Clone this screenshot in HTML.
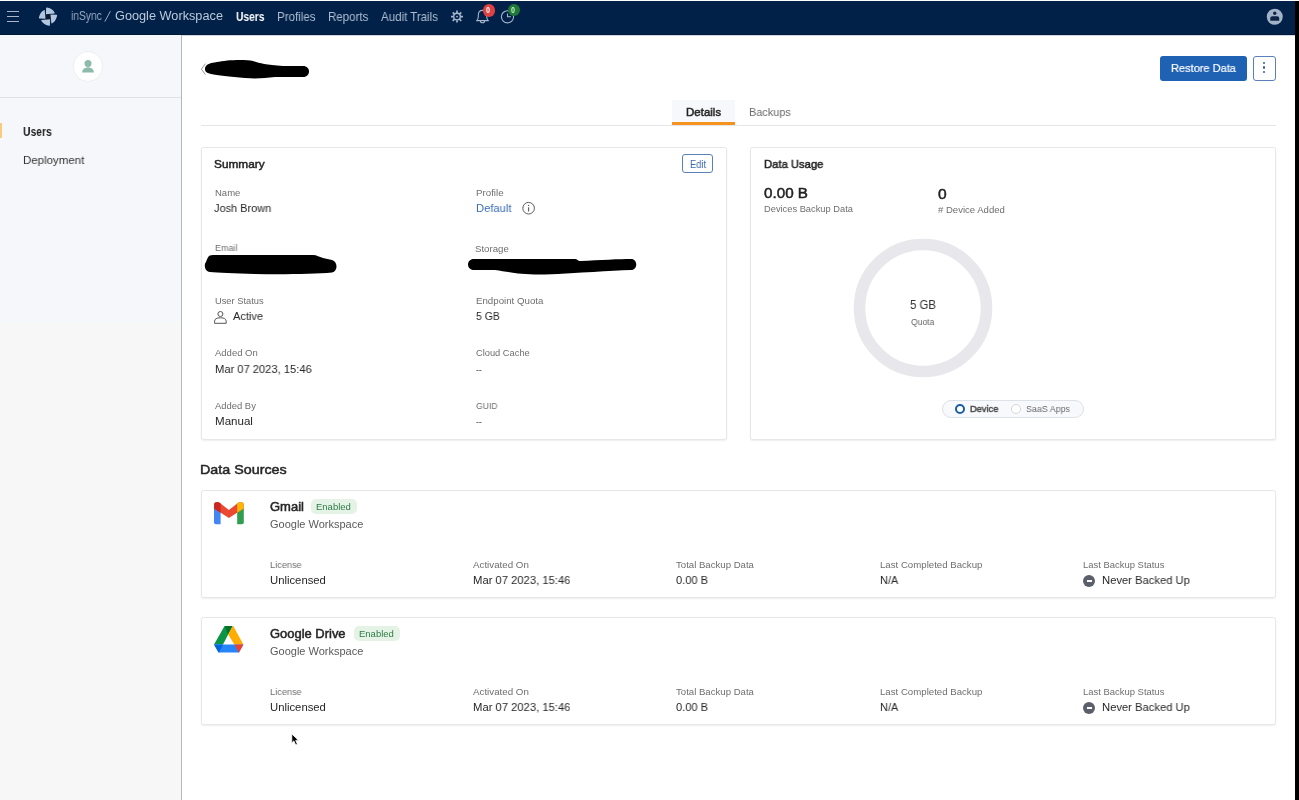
<!DOCTYPE html>
<html><head><meta charset="utf-8">
<style>
*{margin:0;padding:0;box-sizing:border-box}
html,body{width:1299px;height:800px;overflow:hidden;background:#fff;font-family:"Liberation Sans",sans-serif;color:#222}
.a{position:absolute}
.t{position:absolute;white-space:nowrap;transform-origin:0 0;will-change:transform}
.card{position:absolute;background:#fff;border:1px solid #e7e7ea;border-radius:2.5px;box-shadow:0 1px 2px rgba(0,0,0,.07)}
</style></head><body>
<div class="a" style="left:0;top:1px;width:1295px;height:34px;background:#012149"></div>
<div class="a" style="left:0;top:34px;width:1295px;height:1px;background:#001936"></div>
<div class="a" style="left:0;top:35px;width:1295px;height:1px;background:#c5d0db;opacity:.8"></div>
<div class="a" style="left:1295px;top:1px;width:4px;height:799px;background:#000"></div>
<!-- hamburger -->
<div class="a" style="left:6.5px;top:11px;width:12.6px;height:1.3px;background:#a9b6c6"></div>
<div class="a" style="left:6.5px;top:16px;width:12.6px;height:1.3px;background:#a9b6c6"></div>
<div class="a" style="left:6.5px;top:20.8px;width:12.6px;height:1.3px;background:#a9b6c6"></div>
<!-- logo -->
<svg class="a" style="left:36px;top:5px" width="24" height="24" viewBox="0 0 24 24">
  <g transform="translate(12 11.7)">
    <circle r="3.6" fill="#0a1a31"/>
    <g fill="#b2c6dd">
    <path id="bl" d="M-2.1 -2.5 L-1.9 -8.6 Q-1.6 -9.3 -0.9 -9.1 Q5 -7.8 6.8 -3.8 Q6.9 -3.4 6.4 -3.3 Z"/>
    <use href="#bl" transform="rotate(90)"/>
    <use href="#bl" transform="rotate(180)"/>
    <use href="#bl" transform="rotate(270)"/>
    </g>
  </g>
</svg>
<svg class="a" style="left:100px;top:8px" width="14" height="16" viewBox="0 0 14 16"><path d="M4.8 13.6 L10.4 3.2" stroke="#97a9bf" stroke-width="1"/></svg>
<!-- gear -->
<svg class="a" style="left:450px;top:10px" width="14" height="14" viewBox="0 0 14 14">
  <g stroke="#a6b6cb" fill="none">
    <circle cx="7" cy="6.6" r="3.3" stroke-width="1.4"/>
    <path stroke-width="1.7" d="M7 0.6v2.4M7 10.2v2.4M1 6.6h2.4M10.6 6.6h2.4M2.75 2.35l1.7 1.7M9.55 9.15l1.7 1.7M2.75 10.85l1.7-1.7M9.55 4.05l1.7-1.7"/>
  </g>
  <circle cx="7" cy="6.6" r="0.9" fill="#a6b6cb"/>
</svg>
<!-- bell -->
<svg class="a" style="left:475px;top:9px" width="16" height="16" viewBox="0 0 16 16">
  <path d="M1.2 11.6 H13.8 M1.7 11.6 Q3.3 10.2 3.3 7.6 V6.2 Q3.3 1.4 7.5 1.4 Q11.7 1.4 11.7 6.2 V7.6 Q11.7 10.2 13.3 11.6 M5.4 12 Q5.4 13.8 7.5 13.8 Q9.6 13.8 9.6 12" stroke="#a6b6cb" stroke-width="1.1" fill="none"/>
</svg>
<div class="a" style="left:482.5px;top:4.4px;width:12.4px;height:12.4px;border-radius:50%;background:#df4141"></div>
<!-- clock -->
<svg class="a" style="left:499px;top:8px" width="17" height="17" viewBox="0 0 17 17">
  <circle cx="8.5" cy="8.8" r="6.1" stroke="#a6b6cb" stroke-width="1.1" fill="none"/>
  <path d="M8.5 5.5v3.3h3.5" stroke="#a6b6cb" stroke-width="1.1" fill="none"/>
</svg>
<div class="a" style="left:507.7px;top:4.1px;width:12.2px;height:12.2px;border-radius:50%;background:#1e7838"></div>
<div class="t" style="left:486.2px;top:5.2px;font-size:9px;line-height:10px;color:#fff;font-weight:bold;transform:scaleX(0.8)">0</div>
<div class="t" style="left:511.4px;top:4.9px;font-size:9px;line-height:10px;color:#c9f1c9;font-weight:bold;transform:scaleX(0.8)">0</div>
<!-- avatar -->
<svg class="a" style="left:1266px;top:8px" width="18" height="18" viewBox="0 0 18 18">
  <circle cx="8.75" cy="8.75" r="8" fill="#a3b3c7"/>
  <circle cx="8.75" cy="5.3" r="1.7" fill="#0e2446"/>
  <path d="M4.3 12.8 V10.2 Q4.3 8.3 6.3 8.3 H11.2 Q13.2 8.3 13.2 10.2 V12.8 Z" fill="#0e2446"/>
</svg>

<!-- sidebar -->
<div class="a" style="left:0;top:35px;width:182px;height:765px;background:linear-gradient(#f5f7fa 0,#f5f7fa 288px,#f7f7f8 288px);border-right:1px solid #b4b6ba"></div>
<div class="a" style="left:72.5px;top:51px;width:30.5px;height:30.5px;border-radius:50%;background:#fff;border:1px solid #eceef2"></div>
<svg class="a" style="left:80px;top:58px" width="16" height="16" viewBox="0 0 16 16">
  <circle cx="8" cy="5.6" r="3.5" fill="#8dbbab"/>
  <path d="M2 14.5 Q2.5 9.5 8 9.3 Q13.5 9.5 14 14.5 Z" fill="#8dbbab"/>
</svg>
<div class="a" style="left:0;top:97px;width:181px;height:1px;background:#e0e2e6"></div>
<div class="a" style="left:0;top:123px;width:1.5px;height:15px;background:#f9cc7c"></div>

<!-- header -->
<svg class="a" style="left:195px;top:50px" width="130" height="40" viewBox="0 0 130 40">
  <path d="M10.4 13.6 L6.4 19.2 L10.4 24.6" stroke="#8c8c8c" stroke-width="0.9" fill="none"/>
  <path d="M10 19 C10 14 16 13 22 12 C30 10 50 9 58 11 C64 13 70 15 88 16 L108 16 C116 16 116 27 108 27 L80 27 C70 28 62 29 50 28 C35 27 22 25 16 24 C11 23 10 21 10 19 Z" fill="#000"/>
</svg>
<div class="a" style="left:1160.4px;top:56.2px;width:86.8px;height:24.5px;background:#1f62b4;border-radius:3px"></div>
<div class="a" style="left:1253.4px;top:56.4px;width:22.4px;height:24.3px;border:1px solid #5b7fbd;border-radius:3px;background:#fff"></div>
<div class="a" style="left:1263.2px;top:62px;width:2.2px;height:2.2px;background:#2f5fa8;border-radius:50%"></div>
<div class="a" style="left:1263.2px;top:66.4px;width:2.2px;height:2.2px;background:#2f5fa8;border-radius:50%"></div>
<div class="a" style="left:1263.2px;top:70.7px;width:2.2px;height:2.2px;background:#2f5fa8;border-radius:50%"></div>

<!-- tabs -->
<div class="a" style="left:672px;top:100px;width:63px;height:25px;background:#f7f8fb"></div>
<div class="a" style="left:201px;top:124.8px;width:1075px;height:1.2px;background:#e6e6e8"></div>
<div class="a" style="left:672px;top:122.2px;width:63px;height:2.6px;background:#f5931e"></div>

<!-- cards -->
<div class="card" style="left:201px;top:147px;width:525.8px;height:292.5px"></div>
<div class="card" style="left:750.2px;top:147px;width:525.6px;height:292.5px"></div>
<div class="card" style="left:201px;top:490.2px;width:1074.8px;height:107.8px"></div>
<div class="card" style="left:201px;top:617px;width:1074.8px;height:107.5px"></div>

<!-- edit -->
<div class="a" style="left:682.2px;top:154.2px;width:31px;height:18.5px;border:1.2px solid #5a80b8;border-radius:3px"></div>
<!-- info icon -->
<svg class="a" style="left:521px;top:201px" width="15" height="15" viewBox="0 0 15 15">
  <circle cx="7.6" cy="7.2" r="5.8" stroke="#5c5c5c" stroke-width="1" fill="none"/>
  <path d="M7.6 6.2v4.3" stroke="#5c5c5c" stroke-width="1.1"/>
  <circle cx="7.6" cy="4.4" r="0.7" fill="#5c5c5c"/>
</svg>
<!-- email blob -->
<svg class="a" style="left:195px;top:235px" width="150" height="45" viewBox="0 0 150 45">
  <path d="M14 21 C15 20 17 20 20 20 L118 20 C122 20 124 22 128 23 L137 25 C143 27 143 36 137 37.5 C120 39 90 39.5 60 39 C40 38.5 22 37.5 15 37 C9 36 9 29 11 27 C12 24 13 22 14 21 Z" fill="#000"/>
</svg>
<!-- storage blob -->
<svg class="a" style="left:460px;top:235px" width="190" height="45" viewBox="0 0 190 45">
  <path d="M14 24 L115 24 C117 24 118 26 120 26 C140 25 160 24 171 24 C178 24 178 35 171 35 C150 35.5 120 38 85 39.5 C60 40 50 37 35 35 L14 35 C6 35 6 24 14 24 Z" fill="#000"/>
</svg>
<!-- user status icon -->
<svg class="a" style="left:213px;top:310px" width="15" height="15" viewBox="0 0 15 15">
  <circle cx="7.4" cy="4" r="2.5" stroke="#555" stroke-width="1" fill="none"/>
  <path d="M1.6 13.3 V11.2 Q1.6 7.8 7.4 7.8 Q13.2 7.8 13.2 11.2 V13.3 Z" stroke="#555" stroke-width="1" fill="none"/>
</svg>

<!-- donut -->
<svg class="a" style="left:843px;top:228px" width="160" height="160" viewBox="0 0 160 160">
  <circle cx="80" cy="80" r="63.5" stroke="#e8e8ec" stroke-width="11.6" fill="none"/>
</svg>
<!-- toggle -->
<div class="a" style="left:942.4px;top:400.4px;width:141.6px;height:18.1px;border:1px solid #dde1e8;border-radius:9px;background:#f8f9fc"></div>
<div class="a" style="left:954.6px;top:404.2px;width:10px;height:10px;border:2.6px solid #1d5ba6;border-radius:50%;background:#fff"></div>
<div class="a" style="left:1010.9px;top:404px;width:10px;height:10px;border:1px solid #d6d6d6;border-radius:50%;background:#fff"></div>

<!-- gmail icon -->
<svg class="a" style="left:214.1px;top:501.8px" width="30" height="23" viewBox="0 0 30 23">
  <path d="M0 6 V20.3 Q0 22.3 2 22.3 H6.6 V10 Z" fill="#4285f4"/>
  <path d="M23.2 10 V22.3 H27.8 Q29.8 22.3 29.8 20.3 V6 Z" fill="#2f9e4f"/>
  <path d="M0 3.3 Q0 0 3.3 0 Q4.5 0 5.6 0.8 L14.9 7.9 L24.2 0.8 Q25.3 0 26.5 0 Q29.8 0 29.8 3.3 V6.6 L14.9 16.1 L0 6.6 Z" fill="#ea4a31"/>
  <path d="M0 3.3 Q0 0 3.3 0 Q4.5 0 5.6 0.8 L6.6 1.55 V10.8 L0 6.6 Z" fill="#c9271f"/>
  <path d="M23.2 1.55 L24.2 0.8 Q25.3 0 26.5 0 Q29.8 0 29.8 3.3 V6.6 L23.2 10.8 Z" fill="#fbb604"/>
</svg>
<!-- drive icon -->
<svg class="a" style="left:214.2px;top:626.2px" width="30" height="27" viewBox="0 0 30 27">
  <path d="M10.4 0.3 Q10.6 0 11 0 H18.6 L9 18.5 H0 Z" fill="#0d9547"/>
  <path d="M10.6 0 H18.6 L14.2 8.3 Z" fill="#00742e"/>
  <path d="M18.6 0 Q19.2 0 19.5 0.5 L29.4 18.5 H20.4 L14.2 8.5 Z" fill="#ffad00"/>
  <path d="M0 18.5 H29.4 L25.3 26 Q25 26.6 24.3 26.6 H5.2 Q4.6 26.6 4.3 26 Z" fill="#2684fc"/>
  <path d="M0 18.5 H9 L5 26.6 Q4.6 26.6 4.3 26 Z" fill="#0066da"/>
  <path d="M20.4 18.5 H29.4 L25.3 26 Q25 26.6 24.6 26.6 Z" fill="#ea4335"/>
</svg>
<!-- badges -->
<div class="a" style="left:310.6px;top:499.3px;width:46.2px;height:14.6px;border-radius:5px;background:#e4f3e6"></div>
<div class="a" style="left:353.5px;top:625.7px;width:46px;height:15.3px;border-radius:5px;background:#e4f3e6"></div>
<!-- never backed up icons -->
<div class="a" style="left:1083.2px;top:574.8px;width:12.2px;height:12.2px;border-radius:50%;background:#5b5f6b"></div>
<div class="a" style="left:1086.6px;top:580.1px;width:5.4px;height:1.6px;background:#fff"></div>
<div class="a" style="left:1083.2px;top:701.8px;width:12.2px;height:12.2px;border-radius:50%;background:#5b5f6b"></div>
<div class="a" style="left:1086.6px;top:707.1px;width:5.4px;height:1.6px;background:#fff"></div>

<!-- cursor -->
<svg class="a" style="left:289px;top:731px" width="12" height="17" viewBox="0 0 12 17">
  <path d="M2.8 2.9 L2.8 11.9 L4.9 9.9 L6.7 14 L8.4 13.2 L6.7 9.4 L9.4 9.2 Z" fill="#000" stroke="#fff" stroke-width="0.8"/>
</svg>

<div class="t" style="left:71.00px;top:8.87px;font-size:12.5px;line-height:15px;font-weight:normal;color:#97a9bf;transform:scaleX(0.8211)">inSync</div>
<div class="t" style="left:115.40px;top:8.87px;font-size:12.5px;line-height:15px;font-weight:normal;color:#bccadb;transform:scaleX(1.0177)">Google Workspace</div>
<div class="t" style="left:236.30px;top:9.77px;font-size:12.2px;line-height:15px;font-weight:bold;color:#ffffff;transform:scaleX(0.8416)">Users</div>
<div class="t" style="left:277.15px;top:9.77px;font-size:12.2px;line-height:15px;font-weight:normal;color:#b0bfd1;transform:scaleX(0.9483)">Profiles</div>
<div class="t" style="left:327.65px;top:9.77px;font-size:12.2px;line-height:15px;font-weight:normal;color:#b0bfd1;transform:scaleX(0.9452)">Reports</div>
<div class="t" style="left:381.00px;top:9.77px;font-size:12.2px;line-height:15px;font-weight:normal;color:#b0bfd1;transform:scaleX(0.9436)">Audit Trails</div>
<div class="t" style="left:22.70px;top:124.64px;font-size:12px;line-height:14px;font-weight:bold;color:#1c1c1c;transform:scaleX(0.8610)">Users</div>
<div class="t" style="left:22.70px;top:152.81px;font-size:11.8px;line-height:14px;font-weight:normal;color:#333333;transform:scaleX(0.9738)">Deployment</div>
<div class="t" style="left:1170.80px;top:61.02px;font-size:11.5px;line-height:14px;-webkit-text-stroke:0.2px #ffffff;color:#ffffff;transform:scaleX(0.9582)">Restore Data</div>
<div class="t" style="left:686.00px;top:104.82px;font-size:11.5px;line-height:14px;-webkit-text-stroke:0.5px #222222;color:#222222;transform:scaleX(0.9943)">Details</div>
<div class="t" style="left:748.90px;top:104.82px;font-size:11.5px;line-height:14px;font-weight:normal;color:#6a6a6a;transform:scaleX(0.9491)">Backups</div>
<div class="t" style="left:214.00px;top:157.02px;font-size:11.5px;line-height:14px;-webkit-text-stroke:0.5px #262626;color:#262626;transform:scaleX(1.0273)">Summary</div>
<div class="t" style="left:689.80px;top:159.13px;font-size:10px;line-height:12px;font-weight:normal;color:#3a68a6;transform:scaleX(0.9282)">Edit</div>
<div class="t" style="left:214.80px;top:187.78px;font-size:9.3px;line-height:11px;font-weight:normal;color:#6e6e6e;transform:scaleX(1.0232)">Name</div>
<div class="t" style="left:214.00px;top:200.88px;font-size:11.3px;line-height:14px;font-weight:normal;color:#262626;transform:scaleX(0.9704)">Josh Brown</div>
<div class="t" style="left:476.00px;top:187.68px;font-size:9.3px;line-height:11px;font-weight:normal;color:#6e6e6e;transform:scaleX(1.0465)">Profile</div>
<div class="t" style="left:476.00px;top:201.28px;font-size:11.3px;line-height:14px;font-weight:normal;color:#3a6db8;transform:scaleX(0.9876)">Default</div>
<div class="t" style="left:214.60px;top:243.18px;font-size:9.3px;line-height:11px;font-weight:normal;color:#6e6e6e;transform:scaleX(0.9663)">Email</div>
<div class="t" style="left:475.40px;top:243.78px;font-size:9.3px;line-height:11px;font-weight:normal;color:#6e6e6e;transform:scaleX(1.0373)">Storage</div>
<div class="t" style="left:214.60px;top:295.98px;font-size:9.3px;line-height:11px;font-weight:normal;color:#6e6e6e">User Status</div>
<div class="t" style="left:233.00px;top:309.18px;font-size:11.3px;line-height:14px;font-weight:normal;color:#262626;transform:scaleX(0.9777)">Active</div>
<div class="t" style="left:475.90px;top:295.98px;font-size:9.3px;line-height:11px;font-weight:normal;color:#6e6e6e;transform:scaleX(1.0437)">Endpoint Quota</div>
<div class="t" style="left:475.90px;top:309.18px;font-size:11.3px;line-height:14px;font-weight:normal;color:#262626;transform:scaleX(0.9243)">5 GB</div>
<div class="t" style="left:214.60px;top:348.48px;font-size:9.3px;line-height:11px;font-weight:normal;color:#6e6e6e;transform:scaleX(1.0216)">Added On</div>
<div class="t" style="left:214.60px;top:361.78px;font-size:11.3px;line-height:14px;font-weight:normal;color:#262626;transform:scaleX(0.9868)">Mar 07 2023, 15:46</div>
<div class="t" style="left:475.90px;top:348.48px;font-size:9.3px;line-height:11px;font-weight:normal;color:#6e6e6e">Cloud Cache</div>
<div class="t" style="left:476.00px;top:361.78px;font-size:11.3px;line-height:14px;font-weight:normal;color:#555;transform:scaleX(0.7730)">--</div>
<div class="t" style="left:214.60px;top:400.98px;font-size:9.3px;line-height:11px;font-weight:normal;color:#6e6e6e;transform:scaleX(1.0131)">Added By</div>
<div class="t" style="left:214.60px;top:413.88px;font-size:11.3px;line-height:14px;font-weight:normal;color:#262626;transform:scaleX(1.0235)">Manual</div>
<div class="t" style="left:476.00px;top:400.98px;font-size:9.3px;line-height:11px;font-weight:normal;color:#6e6e6e;transform:scaleX(0.9265)">GUID</div>
<div class="t" style="left:476.00px;top:413.88px;font-size:11.3px;line-height:14px;font-weight:normal;color:#555;transform:scaleX(0.7730)">--</div>
<div class="t" style="left:764.00px;top:156.82px;font-size:11.5px;line-height:14px;-webkit-text-stroke:0.5px #262626;color:#262626;transform:scaleX(0.9779)">Data Usage</div>
<div class="t" style="left:764.00px;top:184.30px;font-size:15px;line-height:18px;-webkit-text-stroke:0.5px #222222;color:#222222;transform:scaleX(1.0147)">0.00 B</div>
<div class="t" style="left:764.00px;top:204.48px;font-size:9.3px;line-height:11px;font-weight:normal;color:#6e6e6e">Devices Backup Data</div>
<div class="t" style="left:938.30px;top:184.50px;font-size:15px;line-height:18px;-webkit-text-stroke:0.5px #222222;color:#222222;transform:scaleX(1.0375)">0</div>
<div class="t" style="left:938.30px;top:204.58px;font-size:9.3px;line-height:11px;font-weight:normal;color:#6e6e6e;transform:scaleX(1.0265)"># Device Added</div>
<div class="t" style="left:910.00px;top:298.34px;font-size:12px;line-height:14px;font-weight:normal;color:#333333;transform:scaleX(0.9509)">5 GB</div>
<div class="t" style="left:910.90px;top:316.58px;font-size:9.3px;line-height:11px;font-weight:normal;color:#666666;transform:scaleX(0.9214)">Quota</div>
<div class="t" style="left:970.10px;top:402.90px;font-size:9.8px;line-height:12px;-webkit-text-stroke:0.5px #4a4a4a;color:#4a4a4a;transform:scaleX(0.9476)">Device</div>
<div class="t" style="left:1026.00px;top:402.90px;font-size:9.8px;line-height:12px;font-weight:normal;color:#6a6a6a;transform:scaleX(0.9060)">SaaS Apps</div>
<div class="t" style="left:200.14px;top:461.72px;font-size:13.5px;line-height:16px;-webkit-text-stroke:0.5px #262626;color:#262626;transform:scaleX(1.0600)">Data Sources</div>
<div class="t" style="left:269.80px;top:499.54px;font-size:12px;line-height:14px;-webkit-text-stroke:0.5px #262626;color:#262626;transform:scaleX(1.0825)">Gmail</div>
<div class="t" style="left:316.20px;top:500.91px;font-size:9.5px;line-height:11px;font-weight:normal;color:#2f7b47">Enabled</div>
<div class="t" style="left:269.80px;top:518.09px;font-size:11px;line-height:13px;font-weight:normal;color:#5a5a5a">Google Workspace</div>
<div class="t" style="left:269.50px;top:559.78px;font-size:9.3px;line-height:11px;font-weight:normal;color:#6e6e6e;transform:scaleX(0.9883)">License</div>
<div class="t" style="left:269.50px;top:573.08px;font-size:11.3px;line-height:14px;font-weight:normal;color:#262626">Unlicensed</div>
<div class="t" style="left:472.60px;top:559.78px;font-size:9.3px;line-height:11px;font-weight:normal;color:#6e6e6e;transform:scaleX(1.0499)">Activated On</div>
<div class="t" style="left:472.60px;top:573.08px;font-size:11.3px;line-height:14px;font-weight:normal;color:#262626;transform:scaleX(0.9939)">Mar 07 2023, 15:46</div>
<div class="t" style="left:676.10px;top:559.78px;font-size:9.3px;line-height:11px;font-weight:normal;color:#6e6e6e;transform:scaleX(1.0330)">Total Backup Data</div>
<div class="t" style="left:676.00px;top:573.08px;font-size:11.3px;line-height:14px;font-weight:normal;color:#262626;transform:scaleX(0.9774)">0.00 B</div>
<div class="t" style="left:879.80px;top:559.78px;font-size:9.3px;line-height:11px;font-weight:normal;color:#6e6e6e;transform:scaleX(1.0372)">Last Completed Backup</div>
<div class="t" style="left:879.80px;top:573.08px;font-size:11.3px;line-height:14px;font-weight:normal;color:#262626;transform:scaleX(0.9691)">N/A</div>
<div class="t" style="left:1083.20px;top:560.08px;font-size:9.3px;line-height:11px;font-weight:normal;color:#6e6e6e;transform:scaleX(1.0155)">Last Backup Status</div>
<div class="t" style="left:1101.90px;top:573.28px;font-size:11.3px;line-height:14px;font-weight:normal;color:#262626;transform:scaleX(0.9926)">Never Backed Up</div>
<div class="t" style="left:269.50px;top:626.64px;font-size:12px;line-height:14px;-webkit-text-stroke:0.5px #262626;color:#262626;transform:scaleX(1.0788)">Google Drive</div>
<div class="t" style="left:359.10px;top:627.91px;font-size:9.5px;line-height:11px;font-weight:normal;color:#2f7b47">Enabled</div>
<div class="t" style="left:269.80px;top:644.99px;font-size:11px;line-height:13px;font-weight:normal;color:#5a5a5a">Google Workspace</div>
<div class="t" style="left:269.50px;top:686.78px;font-size:9.3px;line-height:11px;font-weight:normal;color:#6e6e6e;transform:scaleX(0.9883)">License</div>
<div class="t" style="left:269.50px;top:700.08px;font-size:11.3px;line-height:14px;font-weight:normal;color:#262626">Unlicensed</div>
<div class="t" style="left:472.60px;top:686.78px;font-size:9.3px;line-height:11px;font-weight:normal;color:#6e6e6e;transform:scaleX(1.0499)">Activated On</div>
<div class="t" style="left:472.60px;top:700.08px;font-size:11.3px;line-height:14px;font-weight:normal;color:#262626;transform:scaleX(0.9939)">Mar 07 2023, 15:46</div>
<div class="t" style="left:676.10px;top:686.78px;font-size:9.3px;line-height:11px;font-weight:normal;color:#6e6e6e;transform:scaleX(1.0330)">Total Backup Data</div>
<div class="t" style="left:676.00px;top:700.08px;font-size:11.3px;line-height:14px;font-weight:normal;color:#262626;transform:scaleX(0.9774)">0.00 B</div>
<div class="t" style="left:879.80px;top:686.78px;font-size:9.3px;line-height:11px;font-weight:normal;color:#6e6e6e;transform:scaleX(1.0372)">Last Completed Backup</div>
<div class="t" style="left:879.80px;top:700.08px;font-size:11.3px;line-height:14px;font-weight:normal;color:#262626;transform:scaleX(0.9691)">N/A</div>
<div class="t" style="left:1083.20px;top:687.08px;font-size:9.3px;line-height:11px;font-weight:normal;color:#6e6e6e;transform:scaleX(1.0155)">Last Backup Status</div>
<div class="t" style="left:1101.90px;top:700.28px;font-size:11.3px;line-height:14px;font-weight:normal;color:#262626;transform:scaleX(0.9926)">Never Backed Up</div>
</body></html>
